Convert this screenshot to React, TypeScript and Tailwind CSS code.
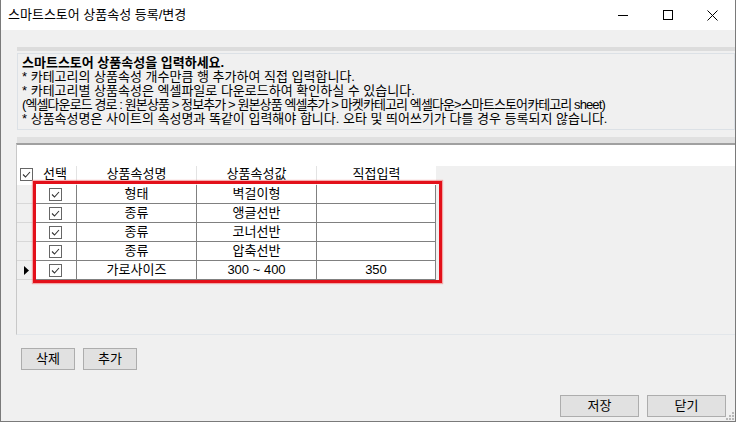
import React from "react";

type Row = {
  name: string;
  value: string;
  direct: string;
};

const rows: Row[] = [
  { name: "형태", value: "벽걸이형", direct: "" },
  { name: "종류", value: "앵글선반", direct: "" },
  { name: "종류", value: "코너선반", direct: "" },
  { name: "종류", value: "압축선반", direct: "" },
  { name: "가로사이즈", value: "300 ~ 400", direct: "350" },
];

const Check = () => (
  <svg width="13" height="13" viewBox="0 0 13 13" className="block">
    <rect x="0.5" y="0.5" width="12" height="12" fill="#fff" stroke="#666" />
    <polyline points="3,6.5 5.5,9 10,4" fill="none" stroke="#333" strokeWidth="1.1" />
  </svg>
);

const WinButton = ({ children, wide }: { children: React.ReactNode; wide?: boolean }) => (
  <button
    type="button"
    className={
      wide
        ? "w-[79px] h-[22px] border border-[#adadad] bg-[#e1e1e1] text-[13px] leading-[20px] text-black"
        : "w-[54px] h-[22px] border border-[#adadad] bg-[#e1e1e1] text-[13px] leading-[20px] text-black"
    }
  >
    {children}
  </button>
);

const App = () => {
  return (
    <div className="w-[736px] h-[422px] relative overflow-hidden bg-[#f0f0f0] border-x border-b border-[#7a7a7a] flex flex-col text-black font-['Liberation_Sans','Noto_Sans_CJK_KR',sans-serif]">
      {/* title bar */}
      <div className="h-[30px] bg-white flex items-center shrink-0">
        <span className="pl-[7px] text-[13px] leading-[30px]">스마트스토어 상품속성 등록/변경</span>
        <div className="ml-auto flex">
          <div className="w-[45px] h-[30px] flex items-center justify-center">
            <svg width="10" height="10" viewBox="0 0 10 10">
              <line x1="0" y1="5.5" x2="10" y2="5.5" stroke="#000" strokeWidth="1" />
            </svg>
          </div>
          <div className="w-[45px] h-[30px] flex items-center justify-center">
            <svg width="10" height="10" viewBox="0 0 10 10">
              <rect x="0.5" y="0.5" width="9" height="9" fill="none" stroke="#000" strokeWidth="1" />
            </svg>
          </div>
          <div className="w-[45px] h-[30px] flex items-center justify-center">
            <svg width="11" height="11" viewBox="0 0 11 11">
              <path d="M0.5 0.5 L10.5 10.5 M10.5 0.5 L0.5 10.5" stroke="#000" strokeWidth="1" />
            </svg>
          </div>
        </div>
      </div>

      {/* info panel */}
      <div className="mt-[17px] ml-[16px] h-[4px] bg-[#dcdcdc] shrink-0" />
      <div className="mt-[2px] ml-[16px] h-[77px] border border-[#dce1e6] pl-[4px] pt-[2px] shrink-0 text-[13px] leading-[14px] whitespace-nowrap">
        <div className="font-bold">스마트스토어 상품속성을 입력하세요.</div>
        <div>* 카테고리의 상품속성 개수만큼 행 추가하여 직접 입력합니다.</div>
        <div>* 카테고리별 상품속성은 엑셀파일로 다운로드하여 확인하실 수 있습니다.</div>
        <div className="tracking-[-0.9px]">(엑셀다운로드 경로 : 원본상품 &gt; 정보추가 &gt; 원본상품 엑셀추가 &gt; 마켓카테고리 엑셀다운&gt;스마트스토어카테고리 sheet)</div>
        <div>* 상품속성명은 사이트의 속성명과 똑같이 입력해야 합니다. 오타 및 띄어쓰기가 다를 경우 등록되지 않습니다.</div>
      </div>

      {/* grid */}
      <div className="mt-[7px] ml-[16px] h-[6px] bg-[#e0e0e0] shrink-0" />
      <div className="ml-[15px] h-[192px] shrink-0 flex flex-col border-t-2 border-t-[#a0a0a0] border-l border-l-[#c8c8c8] border-b border-b-[#e2e6ea]">
        <div className="h-[21px] bg-white shrink-0" />
        <div className="flex flex-1">
          <div className="w-[419px] flex flex-col text-[13px]">
            <div className="h-[19px] flex bg-white">
              <div className="w-[17px] pl-[3px] pt-[2px]">
                <Check />
              </div>
              <div className="w-[43px] border-r border-[#e3e3e3] text-center leading-[15px]">선택</div>
              <div className="w-[120px] border-r border-[#e3e3e3] text-center leading-[15px]">상품속성명</div>
              <div className="w-[120px] border-r border-[#e3e3e3] text-center leading-[15px]">상품속성값</div>
              <div className="w-[119px] text-center leading-[15px]">직접입력</div>
            </div>
            {rows.map((row, i) => (
              <div key={i} className="h-[19px] flex">
                <div className="w-[17px] bg-[#f0f0f0] border-r border-r-[#808080] border-b border-b-[#d8d8d8] flex items-center pl-[7px]">
                  {i === rows.length - 1 && (
                    <svg width="5" height="9" viewBox="0 0 5 9">
                      <polygon points="0,0 5,4.5 0,9" fill="#000" />
                    </svg>
                  )}
                </div>
                <div className="w-[43px] bg-white border-r border-b border-[#808080] flex items-center justify-center">
                  <Check />
                </div>
                <div className="w-[120px] bg-white border-r border-b border-[#808080] text-center leading-[18px]">{row.name}</div>
                <div className="w-[120px] bg-white border-r border-b border-[#808080] text-center leading-[18px]">{row.value}</div>
                <div className="w-[119px] bg-white border-r border-b border-[#808080] text-center leading-[18px]">{row.direct}</div>
              </div>
            ))}
          </div>
          <div className="flex-1 bg-[#f0f0f0]" />
        </div>
      </div>

      {/* add / delete */}
      <div className="mt-[13px] ml-[20px] flex gap-[8px]">
        <WinButton>삭제</WinButton>
        <WinButton>추가</WinButton>
      </div>

      {/* save / close */}
      <div className="mt-auto mb-[4px] pr-[9px] flex justify-end gap-[8px]">
        <WinButton wide>저장</WinButton>
        <WinButton wide>닫기</WinButton>
      </div>

      {/* red highlight */}
      <div className="absolute left-[32px] top-[181px] w-[409px] h-[102px] border-[3px] border-[#e3101a] shadow-[0_0_1px_1px_rgba(240,120,120,0.6)] pointer-events-none" />

      {/* size grip */}
      <svg className="absolute right-[1px] bottom-[1px]" width="10" height="10" viewBox="0 0 10 10">
        <rect x="8" y="2" width="2" height="2" fill="#b8b8b8" />
        <rect x="5" y="5" width="2" height="2" fill="#b8b8b8" />
        <rect x="8" y="5" width="2" height="2" fill="#b8b8b8" />
        <rect x="2" y="8" width="2" height="2" fill="#b8b8b8" />
        <rect x="5" y="8" width="2" height="2" fill="#b8b8b8" />
        <rect x="8" y="8" width="2" height="2" fill="#b8b8b8" />
      </svg>
    </div>
  );
};

export default App;
